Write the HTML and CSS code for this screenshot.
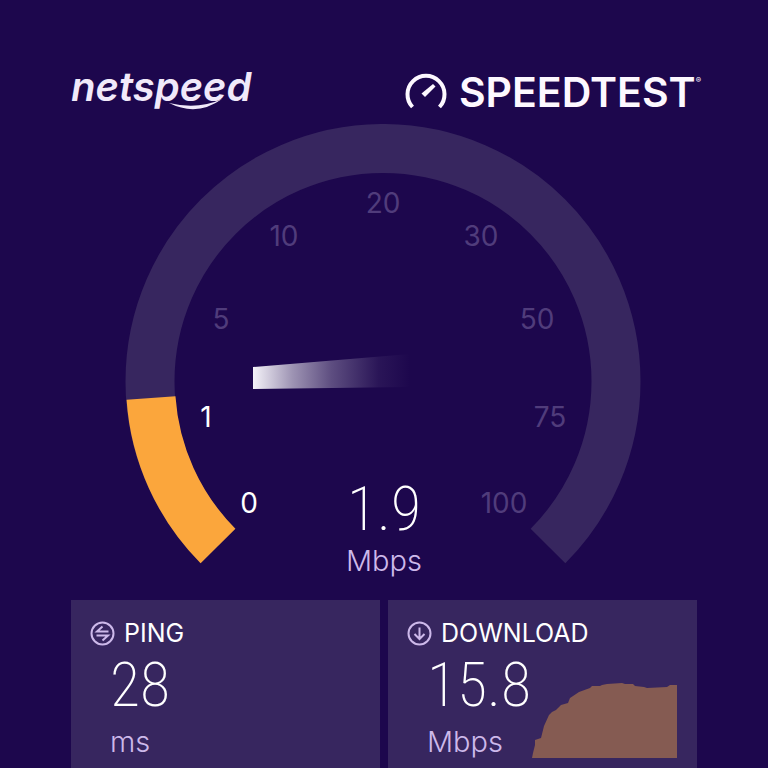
FILE: index.html
```
<!DOCTYPE html>
<html lang="en">
<head>
    <meta charset="UTF-8">
    <meta name="viewport" content="width=device-width, initial-scale=1.0">
    <title>netspeed Speedtest</title>
    <link rel="stylesheet" href="styles.css">
</head>
<body>
<header class="header">
    <svg class="netspeed" viewBox="0 0 182 40" role="img" aria-label="netspeed">
        <text class="netspeed-text" x="0" y="29">netspeed</text>
        <path class="netspeed-swoosh" d="M98 31 Q126 45 151 27 Q127 38 98 31 Z"/>
    </svg>
    <div class="speedtest">
        <svg class="speedtest-icon" viewBox="0 0 42 40" aria-hidden="true">
            <path class="dial" d="M7.5 35 A18.5 18.5 0 1 1 34.5 35"/>
            <path class="hand" d="M28 12 L30.5 14.5 L20 25 L16.5 21.5 Z"/>
        </svg>
        <span class="speedtest-text">SPEEDTEST</span><span class="reg">®</span>
    </div>
</header>

<main>
    <!-- Gauge, 0,0 is the centre of the dial -->
    <svg class="gauge" viewBox="-312 -257 626 476">
        <defs>
            <linearGradient id="needle" x1="0" x2="1" y1="0" y2="0">
                <stop offset="0" stop-color="#f4f2f8"/>
                <stop offset="0.25" stop-color="#f4f2f8" stop-opacity="0.6"/>
                <stop offset="0.5" stop-color="#f4f2f8" stop-opacity="0.3"/>
                <stop offset="0.8" stop-color="#f4f2f8" stop-opacity="0.06"/>
                <stop offset="1" stop-color="#f4f2f8" stop-opacity="0"/>
            </linearGradient>
        </defs>
        <path class="track" d="M-165 165 A233 233 0 1 1 165 165"/>
        <path class="progress" d="M-165 165 A233 233 0 0 1 -232 17"/>
        <path fill="url(#needle)" d="M-130 -14 L27 -27 L27 6 L-130 8 Z"/>
        <g class="labels">
            <text class="on" x="-134" y="132">0</text>
            <text class="on" x="-177" y="46">1</text>
            <text x="-162" y="-52">5</text>
            <text x="-99" y="-135">10</text>
            <text x="0" y="-168">20</text>
            <text x="98" y="-135">30</text>
            <text x="154" y="-52">50</text>
            <text x="167" y="46">75</text>
            <text x="121" y="132">100</text>
        </g>
        <text class="gauge-value" x="1" y="149">1.9</text>
        <text class="gauge-unit" x="1" y="190">Mbps</text>
    </svg>

    <div class="cards">
        <section class="card">
            <h2>
                <svg class="icon" viewBox="0 0 25 25" aria-hidden="true">
                    <circle cx="12.5" cy="12.5" r="11"/>
                    <path d="M12.5 5.5 L7 10.5 H18.5 M6.5 14.5 H18 L12.5 19.5"/>
                </svg>
                PING
            </h2>
            <div class="card-body">
                <div class="reading">
                    <div class="value">28</div>
                    <div class="unit">ms</div>
                </div>
            </div>
        </section>
        <section class="card">
            <h2>
                <svg class="icon" viewBox="0 0 25 25" aria-hidden="true">
                    <circle cx="12.5" cy="12.5" r="11"/>
                    <path d="M12.5 6.5 V18 M7.5 13 L12.5 18 L17.5 13"/>
                </svg>
                DOWNLOAD
            </h2>
            <div class="card-body">
                <div class="reading">
                    <div class="value">15.8</div>
                    <div class="unit">Mbps</div>
                </div>
                <svg class="graph" viewBox="0 0 145 75" aria-hidden="true">
                    <path d="M0 75 L1 70 L3 62 L3 57 L9 55 L12 43 L17 32 L20 29 L24 27 L26 25 L29 22 L36 20 L38 15 L47 9 L58 5 L60 3 L68 3 L70 2 L75 1 L90 0 L93 1 L101 1 L103 3 L112 4 L115 5 L135 4 L138 2 L145 2 L145 75 Z"/>
                </svg>
            </div>
        </section>
    </div>
</main>
</body>
</html>
```
FILE: styles.css
```
* {
    box-sizing: border-box;
}
body {
    display: flex;
    flex-direction: column;
    min-height: 100vh;
    margin: 0;
    padding: 72px 71px 0;
    background-color: #1d074d;
    color: #fff;
    font-family: Inter, "Open Sans", sans-serif;
}
.header {
    display: flex;
    justify-content: space-between;
    align-items: center;
    height: 40px;
    margin: 0 -4px 12px 0;
}
.netspeed {
    width: 182px;
    height: 40px;
    overflow: visible;
    fill: #f1e9fa;
}
.netspeed-text {
    font-size: 40px;
    font-style: italic;
    font-weight: 600;
}
.speedtest {
    display: flex;
    align-items: center;
    color: #fdf8ff;
}
.speedtest-icon {
    width: 42px;
    height: 40px;
    margin-right: 12px;
}
.dial {
    fill: none;
    stroke: #fdf8ff;
    stroke-width: 4;
}
.hand {
    fill: #fdf8ff;
}
.speedtest-text {
    font-size: 41px;
    line-height: 40px;
    font-weight: 600;
}
.reg {
    align-self: flex-start;
    font-size: 8px;
    line-height: 16px;
}
main {
    display: flex;
    flex-direction: column;
    flex: 1;
}
.gauge {
    display: block;
    width: 100%;
}
.track,
.progress {
    fill: none;
    stroke: #37265f;
    stroke-width: 49px;
}
.progress {
    stroke: #fba63c;
}
.gauge text {
    text-anchor: middle;
}
.labels {
    fill: #503c7b;
    font-size: 28px;
}
.labels .on {
    fill: #fff;
}
.gauge-value,
.value {
    fill: #fff;
    font-family: "Roboto Condensed", Roboto, sans-serif;
    font-size: 62px;
    font-weight: 200;
}
.gauge-unit {
    fill: #cdb9ea;
    font-size: 29px;
    font-weight: 300;
}
.cards {
    display: grid;
    grid-template-columns: minmax(0, 1fr) minmax(0, 1fr);
    gap: 8px;
    flex: 1;
}
.card {
    padding: 18px 20px 10px 19px;
    background-color: #37265f;
}
.card h2 {
    display: flex;
    align-items: center;
    gap: 9px;
    margin: 0;
    font-size: 25px;
    line-height: 30px;
    font-weight: 400;
}
.icon {
    width: 25px;
    height: 25px;
    fill: none;
    stroke: #cdb9ea;
    stroke-width: 2;
}
.card-body {
    display: flex;
    justify-content: space-between;
    align-items: flex-end;
}
.reading {
    padding: 9px 0 0 20px;
}
.value {
    line-height: 56px;
}
.unit {
    margin-top: 13px;
    color: #cdb9ea;
    font-size: 29px;
    line-height: 32px;
    font-weight: 300;
}
.graph {
    width: 145px;
    height: 75px;
    fill: #855b52;
}
```
